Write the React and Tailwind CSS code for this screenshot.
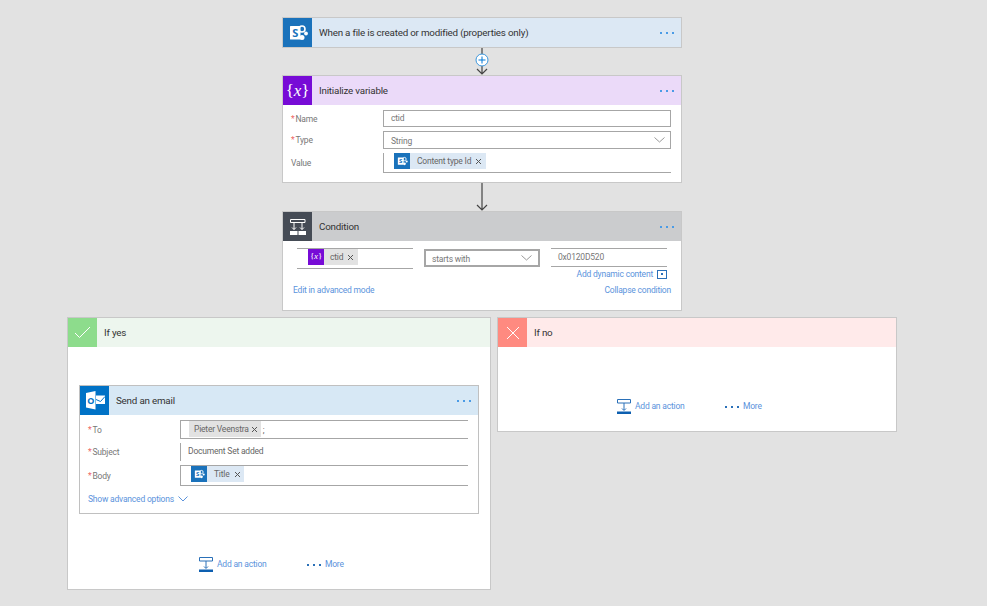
import React from 'react';

const font = { fontFamily: 'Roboto, "Open Sans", sans-serif' };

const SharePointIcon = ({ size = 29 }) => (
  <svg width={size} height={size} viewBox="0 0 29 29">
    <circle cx="19" cy="11" r="3" fill="none" stroke="#fff" strokeWidth="1.600" />
    <circle cx="23" cy="15.500" r="1.900" fill="#fff" />
    <circle cx="19" cy="19.500" r="2.500" fill="#fff" />
    <rect x="7" y="8" width="10.500" height="13.500" rx="0.500" fill="#fff" />
    <text x="12.200" y="18.600" textAnchor="middle" fontSize="11" fontWeight="700" fill="#1a72bb" fontFamily="Open Sans, sans-serif">S</text>
  </svg>
);

const OutlookIcon = () => (
  <svg width="29" height="29" viewBox="0 0 29 29">
    <path d="M16 9.500h9V18h-9z" fill="#fff" />
    <path d="M16 13.500l4.500 2 4.500-5" fill="none" stroke="#0072c6" strokeWidth="1" />
    <path d="M6 7l9.500-2v18.500L6 21.500z" fill="#fff" />
    <text x="10.800" y="17.600" textAnchor="middle" fontSize="9" fontWeight="700" fill="#0072c6" fontFamily="Open Sans, sans-serif">O</text>
  </svg>
);

const VariableIcon = ({ small }) => (
  <span className={`text-white whitespace-nowrap ${small ? 'text-[9px]' : 'text-[17px]'}`} style={{ fontFamily: '"Liberation Serif", serif' }}>
    {'{'}<i>x</i>{'}'}
  </span>
);

const ConditionIcon = () => (
  <svg width="29" height="29" viewBox="0 0 29 29" fill="none" stroke="#fff">
    <path d="M7.500 7.500h14.500v3H7.500zM11 10.500v7M19 10.500v7" />
    <path d="M7 19h7.500v4H7zM15.500 19H23v4h-7.500z" fill="#fff" stroke="none" />
    <path d="M9 15.500l2 2 2-2M17 15.500l2 2 2-2" />
  </svg>
);

const Dots = () => (
  <div className="flex gap-[4px] mr-[7px]">
    <span className="w-[2px] h-[2px] bg-[#4a9be6]" />
    <span className="w-[2px] h-[2px] bg-[#4a9be6]" />
    <span className="w-[2px] h-[2px] bg-[#4a9be6]" />
  </div>
);

const CardHeader = ({ icon, iconBg, bg, title, dots = true }) => (
  <div className={`flex items-center h-[29px] ${bg}`}>
    <div className={`w-[29px] h-full flex items-center justify-center shrink-0 ${iconBg}`}>{icon}</div>
    <span className="ml-[7px] pt-px flex-1 text-[9.8px] text-[#333]">{title}</span>
    {dots && <Dots />}
  </div>
);

const Label = ({ required, children }) => (
  <div className="text-[8.5px] text-[#777] flex items-center h-full pt-px">
    {required && <span className="text-[#e66] mr-px">*</span>}
    {children}
  </div>
);

const Close = ({ color = '#555' }) => (
  <svg width="7" height="7" viewBox="0 0 7 7" className="shrink-0">
    <path d="M1 1l5 5M6 1l-5 5" stroke={color} strokeWidth="1" />
  </svg>
);

const Chevron = () => (
  <svg width="11" height="6" viewBox="0 0 11 6" fill="none" stroke="#999">
    <path d="M.500.500l5 4.500 5-4.500" />
  </svg>
);

const Connector = ({ height, plus }) => (
  <div className="relative flex justify-center" style={{ height }}>
    <svg width="16" height={height} viewBox={`0 0 16 ${height}`} fill="none" stroke="#444">
      <path d={`M8 0v${height - 1}M3 ${height - 6}l5 5 5-5`} strokeWidth="1.200" />
      {plus && (
        <>
          <circle cx="8" cy="12" r="6" fill="#fff" stroke="#3a96dd" />
          <path d="M4.500 12h7M8 8.500v7" stroke="#0078d7" />
        </>
      )}
    </svg>
  </div>
);

const AddActions = ({ className }) => (
  <div className={`flex items-center text-[8.5px] text-[#5b93dc] ${className}`}>
    <svg width="14" height="15" viewBox="0 0 14 15" fill="none" stroke="#2a70b8" className="mr-[4px]">
      <path d="M.500.500h13v3.500H.500zM7 4v7M5 9.500l2 2 2-2" />
      <path d="M0 12.500h14V15H0z" fill="#0d5fb0" stroke="none" />
    </svg>
    <span className="w-[50px] whitespace-nowrap">Add an action</span>
    <div className="flex gap-[4px] ml-[40px] mr-[4px] w-[14px]">
      <span className="w-[2px] h-[2px] bg-[#2a70b8]" />
      <span className="w-[2px] h-[2px] bg-[#2a70b8]" />
      <span className="w-[2px] h-[2px] bg-[#2a70b8]" />
    </div>
    <span>More</span>
  </div>
);

const App = () => {
  return (
    <div className="w-[987px] h-[606px] overflow-hidden bg-[#e2e2e2] pt-[17px] tracking-[-0.2px]" style={font}>
      <div className="w-[400px] ml-[282px]">
        <div className="border border-[#c8c8c8]">
          <CardHeader
            icon={<SharePointIcon />}
            iconBg="bg-[#1a72bb]"
            bg="bg-[#dce8f4]"
            title="When a file is created or modified (properties only)"
          />
        </div>

        <Connector height={27} plus />

        <div className="border border-[#c8c8c8] bg-white h-[108px]">
          <CardHeader icon={<VariableIcon />} iconBg="bg-[#770bd6]" bg="bg-[#ebdaf9]" title="Initialize variable" />
          <div className="grid grid-cols-[92px_288px] grid-rows-[17px_18px_20px] gap-y-[4px] pl-[8px] pt-[5px]">
            <Label required>Name</Label>
            <div className="border border-[#a6a6a6] flex items-center pl-[7px] text-[8.5px] text-[#777]">ctid</div>
            <Label required>Type</Label>
            <div className="border border-[#a6a6a6] flex items-center justify-between pl-[7px] pr-[5px] text-[8.5px] text-[#777]">
              <span className="pt-[2px]">String</span>
              <Chevron />
            </div>
            <Label>Value</Label>
            <div className="border-l border-b border-[#a6a6a6] pl-[10px] flex items-start">
              <div className="flex items-center h-[16px] bg-[#dce8f4] text-[8.5px] text-[#666] pr-[4px]">
                <span className="w-[16px] h-[16px] bg-[#1a72bb] mr-[7px] flex items-center justify-center">
                  <SharePointIcon size={16} />
                </span>
                <span className="pt-px">Content type Id</span>
                <span className="ml-[4px]"><Close /></span>
              </div>
            </div>
          </div>
        </div>

        <Connector height={28} />

        <div className="border border-[#c8c8c8] bg-white h-[100px]">
          <CardHeader icon={<ConditionIcon />} iconBg="bg-[#454b55]" bg="bg-[#cbccce]" title="Condition" />
          <div className="flex items-start pl-[14px] pt-[7px]">
            <div className="w-[116px] h-[21px] border-y border-[#a6a6a6] pl-[11px] flex items-start">
              <div className="flex items-center h-[16px] bg-[#e2e2e2] text-[8.5px] text-[#666] pr-[4px]">
                <span className="w-[16px] h-[16px] bg-[#770bd6] mr-[6px] flex items-center justify-center">
                  <VariableIcon small />
                </span>
                <span className="pt-px">ctid</span>
                <span className="ml-[4px]"><Close /></span>
              </div>
            </div>
            <div className="ml-[11px] mt-px w-[116px] h-[18px] border-2 border-[#a6a6a6] flex items-center justify-between pl-[6px] pr-[6px] text-[8.5px] text-[#777]">
              <span className="pt-[3px]">starts with</span>
              <Chevron />
            </div>
            <div className="ml-[11px] w-[116px]">
              <div className="h-[19px] border-y border-[#a6a6a6] flex items-center pl-[7px] text-[8.5px] text-[#777]">0x0120D520</div>
              <div className="flex items-center justify-end mt-px text-[8.5px] text-[#5b93dc]">
                Add dynamic content
                <span className="ml-[4px] w-[10px] h-[9px] border border-[#2a70b8] flex items-center justify-center">
                  <span className="w-[2px] h-[2px] bg-[#2a70b8]" />
                </span>
              </div>
            </div>
          </div>
          <div className="flex justify-between px-[10px] mt-[3px] text-[8.5px] text-[#5b93dc]">
            <span>Edit in advanced mode</span>
            <span>Collapse condition</span>
          </div>
        </div>
      </div>

      <div className="flex items-start gap-[6px] ml-[67px] mt-[6px]">
        <div className="w-[424px] h-[273px] border border-[#c8c8c8] bg-white">
          <CardHeader
            icon={
              <svg width="17" height="13" viewBox="0 0 17 13" fill="none" stroke="#fff">
                <path d="M1 7l4.500 4.500L16 1" />
              </svg>
            }
            iconBg="bg-[#8ddc8c]"
            bg="bg-[#edf6ee]"
            title="If yes"
            dots={false}
          />
          <div className="mx-[11px] mt-[38px] w-[400px] h-[129px] border border-[#c0c0c0]">
            <CardHeader icon={<OutlookIcon />} iconBg="bg-[#0072c6]" bg="bg-[#d7e8f5]" title="Send an email" />
            <div className="grid grid-cols-[92px_288px] grid-rows-[19px_18px_21px] gap-y-[4px] pl-[8px] pt-[5px]">
              <Label required>To</Label>
              <div className="border-l border-y border-[#a6a6a6] pl-[8px] flex items-start text-[8.5px] text-[#666]">
                <div className="flex items-center h-[16px] bg-[#e2e2e2] pl-[5px] pr-[3px]">
                  <span className="pt-px">Pieter Veenstra</span>
                  <span className="ml-[2px]"><Close /></span>
                </div>
                <span className="ml-[2px] pt-[3px]">;</span>
              </div>
              <Label required>Subject</Label>
              <div className="border-l border-[#a6a6a6] pl-[7px] text-[8.5px] text-[#666] leading-[16px]">Document Set added</div>
              <Label required>Body</Label>
              <div className="border-l border-y border-[#a6a6a6] pl-[10px] flex items-start">
                <div className="flex items-center h-[16px] bg-[#dce8f4] text-[8.5px] text-[#666] pr-[3px]">
                  <span className="w-[16px] h-[16px] bg-[#1a72bb] mr-[7px] flex items-center justify-center">
                    <SharePointIcon size={16} />
                  </span>
                  <span className="pt-px">Title</span>
                  <span className="ml-[4px]"><Close /></span>
                </div>
              </div>
            </div>
            <div className="flex items-center gap-[4px] pl-[8px] mt-[7px] text-[8.5px] text-[#5b93dc]">
              Show advanced options
              <svg width="10" height="6" viewBox="0 0 10 6" fill="none" stroke="#5b93dc">
                <path d="M.500.500l4.500 4.500 4.500-4.500" />
              </svg>
            </div>
          </div>
          <AddActions className="mt-[43px] ml-[131px]" />
        </div>

        <div className="w-[400px] h-[115px] border border-[#c8c8c8] bg-white">
          <CardHeader
            icon={
              <svg width="14" height="14" viewBox="0 0 14 14" fill="none" stroke="#fff">
                <path d="M1 1l12 12M13 1L1 13" />
              </svg>
            }
            iconBg="bg-[#ff8a80]"
            bg="bg-[#ffeaea]"
            title="If no"
            dots={false}
          />
          <AddActions className="mt-[52px] ml-[119px]" />
        </div>
      </div>
    </div>
  );
};

export default App;
